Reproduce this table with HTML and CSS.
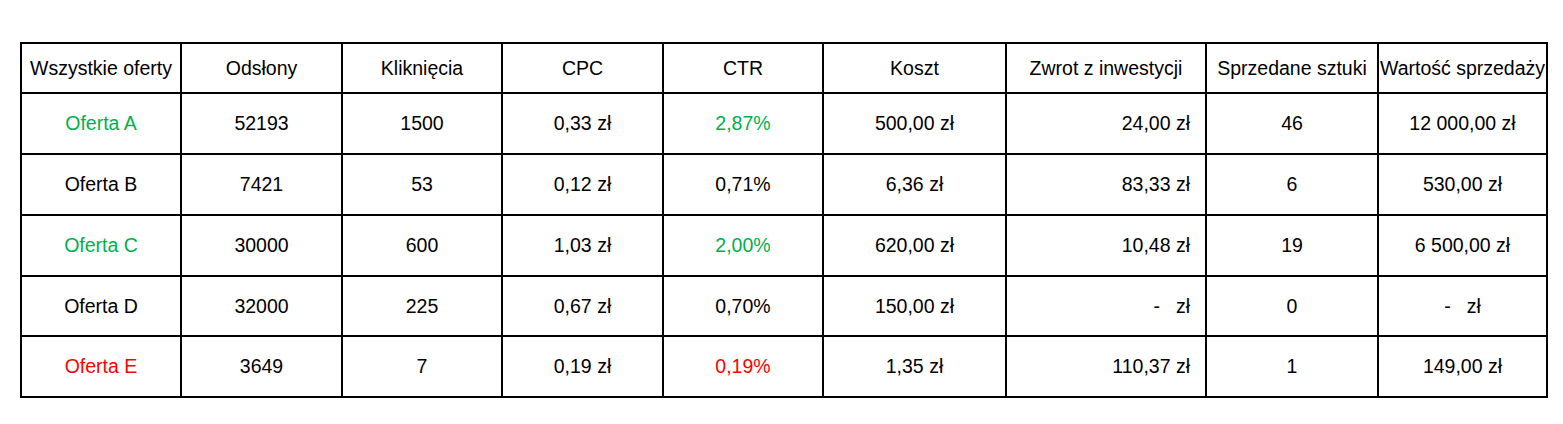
FILE: index.html
```html
<!DOCTYPE html>
<html lang="pl">
<head>
<meta charset="utf-8">
<title>Oferty</title>
<link rel="stylesheet" href="styles.css">
</head>
<body>
<table class="report">
  <colgroup>
    <col class="w1"><col class="w2"><col class="w3"><col class="w4"><col class="w5"><col class="w6"><col class="w7"><col class="w8"><col class="w9">
  </colgroup>
  <thead>
    <tr class="head">
      <th>Wszystkie oferty</th>
      <th>Odsłony</th>
      <th>Kliknięcia</th>
      <th>CPC</th>
      <th>CTR</th>
      <th>Koszt</th>
      <th>Zwrot z inwestycji</th>
      <th>Sprzedane sztuki</th>
      <th>Wartość sprzedaży</th>
    </tr>
  </thead>
  <tbody>
    <tr class="row">
      <td class="green">Oferta A</td>
      <td>52193</td>
      <td>1500</td>
      <td>0,33 zł</td>
      <td class="green">2,87%</td>
      <td>500,00 zł</td>
      <td class="right">24,00 zł</td>
      <td>46</td>
      <td>12 000,00 zł</td>
    </tr>
    <tr class="row">
      <td>Oferta B</td>
      <td>7421</td>
      <td>53</td>
      <td>0,12 zł</td>
      <td>0,71%</td>
      <td>6,36 zł</td>
      <td class="right">83,33 zł</td>
      <td>6</td>
      <td>530,00 zł</td>
    </tr>
    <tr class="row">
      <td class="green">Oferta C</td>
      <td>30000</td>
      <td>600</td>
      <td>1,03 zł</td>
      <td class="green">2,00%</td>
      <td>620,00 zł</td>
      <td class="right">10,48 zł</td>
      <td>19</td>
      <td>6 500,00 zł</td>
    </tr>
    <tr class="row short">
      <td>Oferta D</td>
      <td>32000</td>
      <td>225</td>
      <td>0,67 zł</td>
      <td>0,70%</td>
      <td>150,00 zł</td>
      <td class="right"><span class="dash">-</span>zł</td>
      <td>0</td>
      <td><span class="dash">-</span>zł</td>
    </tr>
    <tr class="row">
      <td class="red">Oferta E</td>
      <td>3649</td>
      <td>7</td>
      <td>0,19 zł</td>
      <td class="red">0,19%</td>
      <td>1,35 zł</td>
      <td class="right">110,37 zł</td>
      <td>1</td>
      <td>149,00 zł</td>
    </tr>
  </tbody>
</table>
</body>
</html>
```
FILE: styles.css
```css
html, body {
  margin: 0;
  padding: 0;
  background: #ffffff;
}

body {
  padding: 42px 0 0 20px;
  font-family: "Liberation Sans", Arial, sans-serif;
  font-size: 19.5px;
  color: #000000;
}

.report {
  table-layout: fixed;
  width: 1528px;
  border-collapse: separate;
  border-spacing: 2px;
  background: #000000;
}

.w1 { width: 158px; }
.w2 { width: 159px; }
.w3 { width: 158px; }
.w4 { width: 159px; }
.w5 { width: 158px; }
.w6 { width: 181px; }
.w7 { width: 198px; }
.w8 { width: 170px; }
.w9 { width: 167px; }

.report th,
.report td {
  background: #ffffff;
  padding: 0;
  text-align: center;
  vertical-align: middle;
  font-weight: normal;
  white-space: nowrap;
  overflow: hidden;
}

.head th {
  height: 48px;
}

.row td {
  height: 59px;
}

.row.short td {
  height: 58px;
}

.report td.right {
  text-align: right;
  padding-right: 15px;
}

.dash {
  display: inline-block;
  margin-right: 16px;
}

.green { color: #00b050; }
.red { color: #ff0000; }
```
